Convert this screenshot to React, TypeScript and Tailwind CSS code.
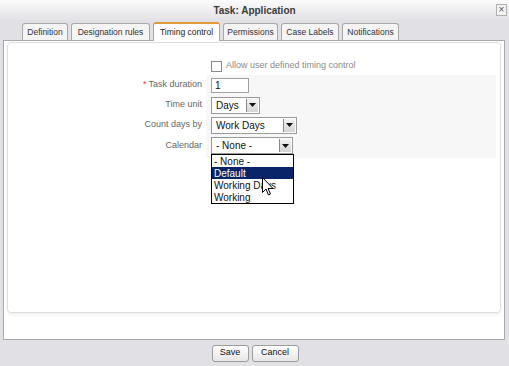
import React from "react";

const tabs = [
  { label: "Definition", w: "w-[46px]" },
  { label: "Designation rules", w: "w-[79px]" },
  { label: "Timing control", w: "w-[67px]", active: true },
  { label: "Permissions", w: "w-[55px]" },
  { label: "Case Labels", w: "w-[58px]" },
  { label: "Notifications", w: "w-[57px]" },
];

function Arrow() {
  return (
    <div className="w-[12px] h-full border-l border-[#888] bg-gradient-to-b from-[#f4f4f4] to-[#d4d4d4] flex items-center justify-center">
      <svg width="7" height="4" viewBox="0 0 7 4">
        <path d="M0 0 L7 0 L3.5 4 Z" fill="#111" />
      </svg>
    </div>
  );
}

function Select({ value, w }: { value: string; w: string }) {
  return (
    <div className={`${w} h-[17px] border border-[#9a9a9a] bg-white flex items-stretch p-[1px]`}>
      <div className="flex-1 pl-[3px] flex items-center text-[10px] text-[#111]">{value}</div>
      <Arrow />
    </div>
  );
}

export default function App() {
  return (
    <div
      className="w-[509px] h-[366px] bg-[#e1e1e5] flex flex-col overflow-hidden relative"
      style={{ fontFamily: '"Liberation Sans", Arial, sans-serif' }}
    >
      {/* Title bar */}
      <div className="h-[20px] bg-gradient-to-b from-[#fbfbfc] to-[#e3e3e7] flex items-center justify-center relative">
        <span className="text-[10px] font-bold text-[#3a3a3a]">Task: Application</span>
        <div className="absolute right-[2px] top-[4px] w-[11px] h-[12px] border border-[#b0b0b0] bg-[#f3f3f3] flex items-center justify-center text-[10px] leading-none text-[#555]">
          ×
        </div>
      </div>

      {/* Tabs */}
      <div className="h-[20px] flex items-end pl-[22px] gap-[3px]">
        {tabs.map((t) =>
          t.active ? (
            <div
              key={t.label}
              className={`${t.w} h-[19px] bg-white border border-[#a8a8a8] border-b-0 border-t-2 border-t-[#e09a3c] rounded-t-[3px] flex items-center justify-center text-[8.5px] text-[#222] -mb-[1px] relative z-10`}
            >
              {t.label}
            </div>
          ) : (
            <div
              key={t.label}
              className={`${t.w} h-[17px] bg-[#f4f4f4] border border-[#a8a8a8] border-b-0 rounded-t-[3px] flex items-center justify-center text-[8.5px] text-[#333]`}
            >
              {t.label}
            </div>
          )
        )}
      </div>

      {/* Frame */}
      <div className="ml-[3px] w-[502px] h-[300px] border border-[#a9a9ad] bg-white flex flex-col pt-[1px] px-[3px]">
        <div className="h-[271px] border border-[#dedede] rounded-[4px] shadow-[0_2px_3px_rgba(0,0,0,0.06)] pt-[15px] pr-[4px] relative">
          {/* checkbox row */}
          <div className="grid grid-cols-[198px_1fr] h-[16px]">
            <div />
            <div className="flex items-center pl-[5px] gap-[4px]">
              <div className="w-[11px] h-[11px] border border-[#8a8a8a] bg-white" />
              <span className="text-[9px] text-[#8a8a8a]">Allow user defined timing control</span>
            </div>
          </div>
          {/* form rows */}
          <div className="grid grid-cols-[198px_1fr] mt-[1px]">
            <div className="flex flex-col text-[9px] text-[#666] items-end pr-[4px]">
              <div className="h-[20px] flex items-center">
                <span className="text-[#d33] mr-[2px]">*</span>Task duration
              </div>
              <div className="h-[20px] flex items-center">Time unit</div>
              <div className="h-[20px] flex items-center">Count days by</div>
              <div className="h-[21px] flex items-center">Calendar</div>
            </div>
            <div className="bg-[#f7f7f7] flex flex-col pl-[5px] pb-[2px]">
              <div className="h-[20px] flex items-center">
                <div className="w-[38px] h-[15px] border border-[#a0a0a0] bg-white text-[10px] pl-[3px] flex items-center text-[#111]">
                  1
                </div>
              </div>
              <div className="h-[20px] flex items-center">
                <Select value="Days" w="w-[49px]" />
              </div>
              <div className="h-[20px] flex items-center">
                <Select value="Work Days" w="w-[86px]" />
              </div>
              <div className="h-[21px] flex items-center relative">
                <Select value="- None -" w="w-[82px]" />
                <div className="absolute left-0 top-[19px] w-[83px] border border-black bg-white z-20 flex flex-col text-[10px] text-[#111]">
                  <div className="h-[12px] pl-[2px] flex items-center">- None -</div>
                  <div className="h-[12px] pl-[2px] flex items-center bg-[#0a246a] text-white">Default</div>
                  <div className="h-[12px] pl-[2px] flex items-center">Working Days</div>
                  <div className="h-[12px] pl-[2px] flex items-center">Working</div>
                </div>
                <svg
                  className="absolute left-[51px] top-[42px] z-30"
                  width="12"
                  height="19"
                  viewBox="0 0 12 19"
                >
                  <path
                    d="M0.5 0.5 L0.5 15.5 L4 12 L6.5 18 L8.5 17 L6 11.5 L11 11.5 Z"
                    fill="white"
                    stroke="black"
                    strokeWidth="1"
                    strokeLinejoin="miter"
                  />
                </svg>
              </div>
            </div>
          </div>
        </div>
      </div>

      {/* Footer */}
      <div className="flex-1 flex items-center justify-center gap-[3px] pl-[1px]">
        <div className="w-[37px] h-[17px] rounded-[3px] border border-[#9c9c9c] bg-gradient-to-b from-white to-[#e6e6e6] flex items-center justify-center text-[9px] text-[#111]">
          Save
        </div>
        <div className="w-[47px] h-[17px] rounded-[3px] border border-[#9c9c9c] bg-gradient-to-b from-white to-[#e6e6e6] flex items-center justify-center text-[9px] text-[#111]">
          Cancel
        </div>
      </div>
    </div>
  );
}
